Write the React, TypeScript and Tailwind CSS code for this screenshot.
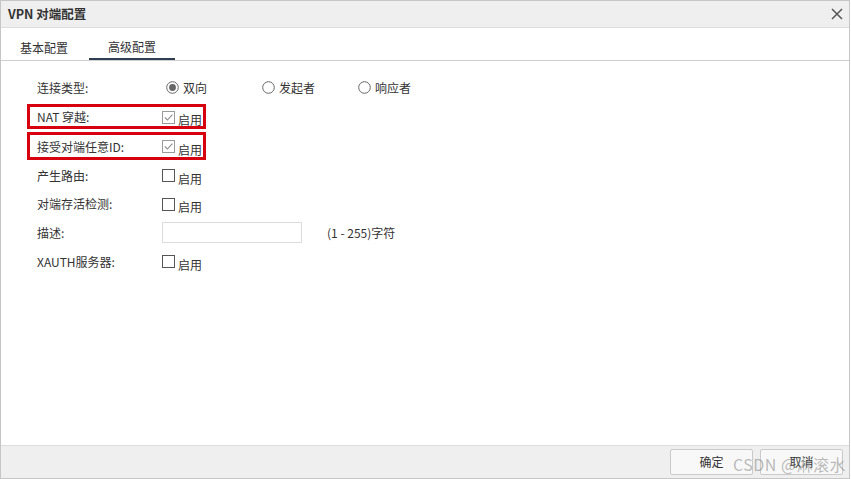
import React from 'react';

const font = { fontFamily: '"Noto Sans CJK SC", "Noto Sans", sans-serif' };

const Checkbox: React.FC<{ checked?: boolean }> = ({ checked }) => (
  <svg width="13" height="13" viewBox="0 0 13 13" className="shrink-0">
    <rect x="0.5" y="0.5" width="12" height="12" fill="#fff" stroke={checked ? '#9a9a9a' : '#555'} />
    {checked && <path d="M2.8 6.4 L5.4 9 L10.4 3.6" fill="none" stroke="#8a8a8a" strokeWidth="1.1" />}
  </svg>
);

const Radio: React.FC<{ checked?: boolean }> = ({ checked }) => (
  <svg width="13" height="13" viewBox="0 0 13 13" className="shrink-0">
    <circle cx="6.5" cy="6.5" r="5.8" fill="#fff" stroke="#666" strokeWidth="1" />
    {checked && <circle cx="6.5" cy="6.5" r="3.4" fill="#666" />}
  </svg>
);

const Enable: React.FC<{ checked?: boolean }> = ({ checked }) => (
  <div className="flex items-center gap-[3px]">
    <Checkbox checked={checked} />
    <span className="relative top-[3px]">启用</span>
  </div>
);

const rows: { label: string; h: string; control: React.ReactNode }[] = [
  {
    label: '连接类型:',
    h: 'h-[29px]',
    control: (
      <div className="flex items-center pl-1">
        {[
          ['双向', true],
          ['发起者', false],
          ['响应者', false],
        ].map(([t, c]) => (
          <div key={t as string} className="flex w-[96px] items-center gap-[4px]">
            <Radio checked={c as boolean} />
            <span>{t as string}</span>
          </div>
        ))}
      </div>
    ),
  },
  { label: 'NAT 穿越:', h: 'h-[30px]', control: <Enable checked /> },
  { label: '接受对端任意ID:', h: 'h-[29px]', control: <Enable checked /> },
  { label: '产生路由:', h: 'h-[29px]', control: <Enable /> },
  { label: '对端存活检测:', h: 'h-[28px]', control: <Enable /> },
  {
    label: '描述:',
    h: 'h-[29px]',
    control: (
      <div className="flex items-center">
        <div className="h-[21px] w-[140px] border border-[#dcdcdc] bg-white" />
        <span className="ml-[25px]">(1 - 255)字符</span>
      </div>
    ),
  },
  { label: 'XAUTH服务器:', h: 'h-[29px]', control: <Enable /> },
];

export default function App() {
  return (
    <div className="relative h-[479px] w-[851px] overflow-hidden bg-white text-[12px] text-[#333]" style={font}>
      <div className="flex h-full w-[850px] flex-col border border-[#c6c6c6]">
        {/* title bar */}
        <div className="flex h-[27px] shrink-0 items-center justify-between border-b border-[#dcdcdc] bg-[#efefef] pl-[7px] pr-[6px]">
          <span className="text-[12.5px] font-bold text-[#333]">VPN 对端配置</span>
          <svg width="12" height="12" viewBox="0 0 12 12">
            <path d="M1 1 L11 11 M11 1 L1 11" stroke="#555" strokeWidth="1.5" />
          </svg>
        </div>

        {/* tabs */}
        <div className="flex h-[33px] shrink-0 items-end border-b border-[#cfcfcf]">
          <div className="flex h-[31px] w-[86px] items-center justify-center pt-[6px]">基本配置</div>
          <div className="ml-[2px] flex h-[31px] w-[86px] items-center justify-center border-b-2 border-[#2f3e52] pt-[6px]">
            高级配置
          </div>
        </div>

        {/* form */}
        <div className="flex-1 pl-[36px] pt-[12px]">
          {rows.map((r) => (
            <div key={r.label} className={`grid grid-cols-[125px_1fr] items-center ${r.h}`}>
              <span>{r.label}</span>
              {r.control}
            </div>
          ))}
        </div>

        {/* footer */}
        <div className="flex h-[33px] shrink-0 items-center justify-end gap-[7px] border-t border-[#dcdcdc] bg-[#efefef] pr-[6px]">
          <button className="h-[26px] w-[83px] rounded-[2px] border border-[#cacaca] bg-[#f8f8f8] text-[12px] text-[#333]">
            确定
          </button>
          <button className="h-[26px] w-[83px] rounded-[2px] border border-[#cacaca] bg-[#f8f8f8] text-[12px] text-[#333]">
            取消
          </button>
        </div>
      </div>

      {/* annotation boxes */}
      <div className="pointer-events-none absolute left-[27px] top-[104px] h-[25px] w-[179px] border-[3px] border-[#d7000f]" />
      <div className="pointer-events-none absolute left-[27px] top-[132px] h-[28px] w-[179px] border-[3px] border-[#d7000f]" />

      {/* watermark */}
      <div className="pointer-events-none absolute left-[733px] top-[452px] text-[16px] tracking-[0.5px] text-[#8f8f8f]/60">
        CSDN @淋滚水
      </div>
    </div>
  );
}
